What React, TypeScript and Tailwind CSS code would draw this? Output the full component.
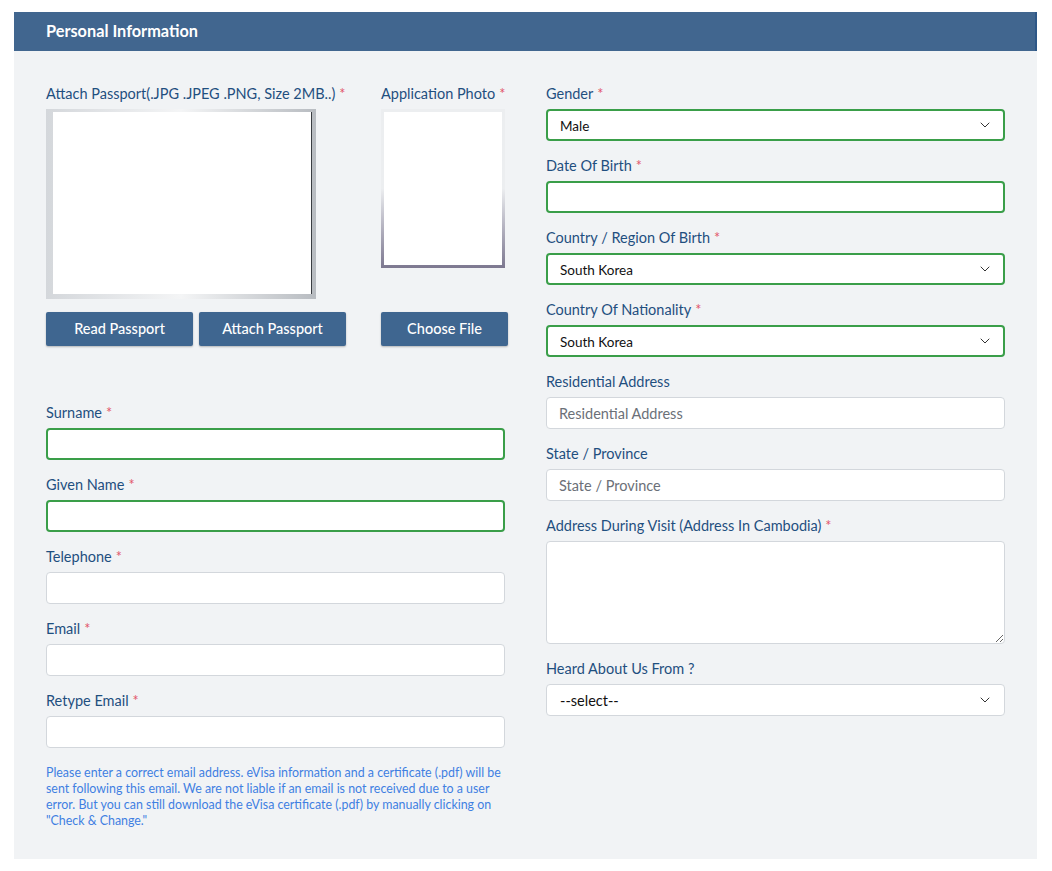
import React from 'react';
import { ChevronDown } from 'lucide-react';

const font = { fontFamily: 'Lato, "Noto Sans", sans-serif' };

function Label({ text, required }: { text: string; required?: boolean }) {
  return (
    <label className="mb-[5px] block h-[20px] text-[14.5px] leading-[20px] text-[#1f4f7f]">
      {text}
      {required && <span className="ml-1 text-[#e2576b]">*</span>}
    </label>
  );
}

function TextField({
  label,
  required,
  valid,
  placeholder,
}: {
  label: string;
  required?: boolean;
  valid?: boolean;
  placeholder?: string;
}) {
  return (
    <div className="mb-[15px]">
      <Label text={label} required={required} />
      <input
        placeholder={placeholder}
        className={
          valid
            ? 'block h-[32px] w-full rounded-[4px] border-2 border-[#3a9e49] bg-white px-3 text-[13.5px] text-black outline-none'
            : 'block h-[32px] w-full rounded-[4px] border border-[#d3d7dc] bg-white px-3 text-[14.5px] text-black outline-none placeholder:text-[#6b7078]'
        }
      />
    </div>
  );
}

function SelectField({
  label,
  required,
  valid,
  value,
}: {
  label: string;
  required?: boolean;
  valid?: boolean;
  value: string;
}) {
  return (
    <div className="mb-[15px]">
      <Label text={label} required={required} />
      <div className="relative">
        <select
          defaultValue={value}
          className={
            valid
              ? 'block h-[32px] w-full appearance-none rounded-[4px] border-2 border-[#3a9e49] bg-white px-[12px] pt-[2px] text-[13.5px] text-[#111] outline-none'
              : 'block h-[32px] w-full appearance-none rounded-[4px] border border-[#d3d7dc] bg-white px-[13px] pt-[1px] text-[14.5px] text-[#111] outline-none'
          }
        >
          <option>{value}</option>
        </select>
        <ChevronDown
          size={16}
          strokeWidth={1.5}
          className="pointer-events-none absolute right-[12px] top-[8px] text-[#333]"
        />
      </div>
    </div>
  );
}

function BlueButton({ children, w }: { children: React.ReactNode; w: string }) {
  return (
    <button
      className={`${w} h-[34px] rounded-[2px] bg-[#3f6690] text-[14.5px] font-medium text-white shadow-[0_1px_2px_rgba(0,0,0,0.25)]`}
    >
      {children}
    </button>
  );
}

export default function App() {
  return (
    <div className="min-h-[871px] bg-white pt-[12px]" style={font}>
      <div className="mx-[14px] w-[1023px]">
        <div className="flex h-[39px] items-center border-r-2 border-[#2d5787] bg-[#41668f] pb-[1px] pl-[32px] text-[16.3px] font-bold text-white">
          Personal Information
        </div>
        <div className="flex gap-[41px] bg-[#f1f3f5] px-[32px] pb-[30px] pt-[33px]">
          {/* left column */}
          <div className="w-[459px]">
            <div className="flex gap-[35px]">
              <div>
                <Label text="Attach Passport(.JPG .JPEG .PNG, Size 2MB..)" required />
                <div className="h-[190px] w-[270px] bg-gradient-to-r from-[#d4d7db] via-[#f4f5f6] to-[#b8bcc1] pb-[5px] pl-[7px] pr-[4px] pt-[3px]">
                  <div className="h-full w-full border-r border-[#3a3d42] bg-white" />
                </div>
                <div className="mt-[13px] flex gap-[6px]">
                  <BlueButton w="w-[147px]">Read Passport</BlueButton>
                  <BlueButton w="w-[147px]">Attach Passport</BlueButton>
                </div>
              </div>
              <div>
                <Label text="Application Photo" required />
                <div className="h-[159px] w-[124px] bg-gradient-to-b from-[#eceef0] via-[#eceef0] to-[#7d7890] px-[3px] pb-[3px] pt-[3px]">
                  <div className="h-full w-full bg-white" />
                </div>
                <div className="mt-[44px]">
                  <BlueButton w="w-[127px]">Choose File</BlueButton>
                </div>
              </div>
            </div>
            <div className="mt-[57px]">
              <TextField label="Surname" required valid />
              <TextField label="Given Name" required valid />
              <TextField label="Telephone" required />
              <TextField label="Email" required />
              <TextField label="Retype Email" required />
            </div>
            <p className="mt-[17px] whitespace-nowrap text-[12.4px] leading-[16px] text-[#3f7fe2]">
              Please enter a correct email address. eVisa information and a certificate (.pdf) will be
              <br />
              sent following this email. We are not liable if an email is not received due to a user
              <br />
              error. But you can still download the eVisa certificate (.pdf) by manually clicking on
              <br />
              "Check &amp; Change."
            </p>
          </div>

          {/* right column */}
          <div className="w-[459px]">
            <SelectField label="Gender" required valid value="Male" />
            <TextField label="Date Of Birth" required valid />
            <SelectField label="Country / Region Of Birth" required valid value="South Korea" />
            <SelectField label="Country Of Nationality" required valid value="South Korea" />
            <TextField label="Residential Address" placeholder="Residential Address" />
            <TextField label="State / Province" placeholder="State / Province" />
            <div className="mb-[15px]">
              <Label text="Address During Visit (Address In Cambodia)" required />
              <textarea className="block h-[103px] w-full rounded-[4px] border border-[#d3d7dc] bg-white px-3 py-2 text-[14px] outline-none" />
            </div>
            <SelectField label="Heard About Us From ?" value="--select--" />
          </div>
        </div>
      </div>
    </div>
  );
}
